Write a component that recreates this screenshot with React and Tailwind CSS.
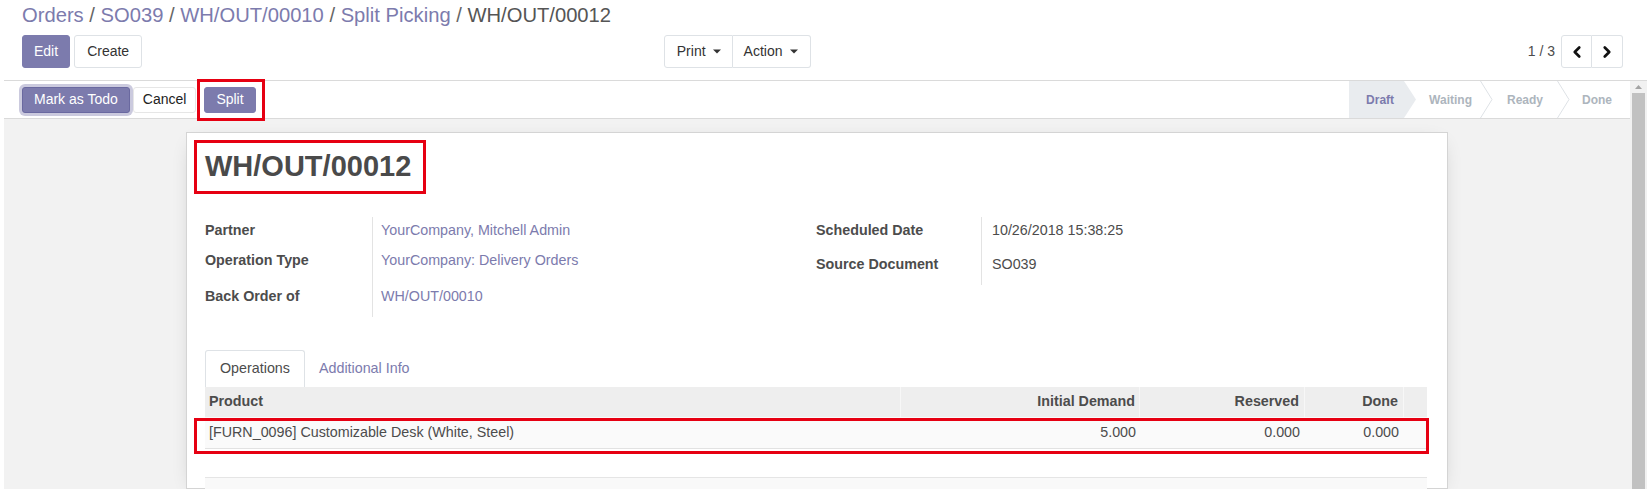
import React from "react";
import { ChevronLeft, ChevronRight } from "lucide-react";

function Caret() {
  return (
    <svg width="8" height="5" viewBox="0 0 8 5" className="ml-[7px]">
      <path d="M0 0.5h8L4 4.5z" fill="#333" />
    </svg>
  );
}

function FieldRow({ label, value, link, h, lw, vp }) {
  return (
    <div className={`flex ${h}`}>
      <div className={`${lw} shrink-0 border-r border-[#e3e3e3] font-bold flex items-center`}>{label}</div>
      <div className={`${vp} flex items-center ${link ? "text-[#7c7bad]" : "text-[#4c4c4c]"}`}>{value}</div>
    </div>
  );
}

export default function App() {
  return (
    <div className="w-[1647px] h-[489px] overflow-hidden bg-white flex flex-col pl-[4px] text-[14px] text-[#4c4c4c] font-['Liberation_Sans',Arial,sans-serif]">
      {/* Control panel */}
      <div className="pl-[18px] pr-[24px] pt-[2px] pb-[12px] border-b border-[#dadada]">
        <div className="h-[26px] leading-[26px] text-[20.2px] whitespace-nowrap">
          <span className="text-[#7c7bad]">Orders</span>
          <span className="text-[#666]"> / </span>
          <span className="text-[#7c7bad]">SO039</span>
          <span className="text-[#666]"> / </span>
          <span className="text-[#7c7bad]">WH/OUT/00010</span>
          <span className="text-[#666]"> / </span>
          <span className="text-[#7c7bad]">Split Picking</span>
          <span className="text-[#666]"> / </span>
          <span className="text-[#555]">WH/OUT/00012</span>
        </div>
        <div className="mt-[7px] flex h-[33px]">
          <div className="w-1/2 flex justify-between pr-[12px]">
            <div className="flex gap-[4px]">
              <button className="h-[33px] px-[11px] rounded-[3px] bg-[#7c7bad] border border-[#7c7bad] text-white">Edit</button>
              <button className="h-[33px] px-[12px] rounded-[3px] bg-white border border-[#dee2e6] text-[#333]">Create</button>
            </div>
            <div className="flex">
              <button className="h-[33px] pl-[12px] pr-[11px] rounded-l-[3px] bg-white border border-[#dee2e6] text-[#333] flex items-center">Print<Caret /></button>
              <button className="h-[33px] pl-[11px] pr-[12px] rounded-r-[3px] bg-white border border-l-0 border-[#dee2e6] text-[#333] flex items-center">Action<Caret /></button>
            </div>
          </div>
          <div className="w-1/2 flex justify-end items-center">
            <span className="mr-[6px] text-[#4c4c4c]">1 / 3</span>
            <div className="flex">
              <button className="h-[33px] w-[31px] rounded-l-[3px] border border-[#dee2e6] bg-white flex items-center justify-center text-[#111]">
                <ChevronLeft size={18} strokeWidth={3.6} />
              </button>
              <button className="h-[33px] w-[31px] rounded-r-[3px] border border-l-0 border-[#dee2e6] bg-white flex items-center justify-center text-[#111]">
                <ChevronRight size={18} strokeWidth={3.6} />
              </button>
            </div>
          </div>
        </div>
      </div>

      <div className="flex flex-1 min-h-0">
        <div className="flex-1 flex flex-col min-w-0">
          {/* Status bar */}
          <div className="h-[38px] shrink-0 border-b border-[#dadada] flex justify-between">
            <div className="flex items-center pl-[18px] gap-[3px]">
              <button className="h-[26px] px-[11px] rounded-[3px] bg-[#7c7bad] border border-[#6a69a0] text-white ring-[3px] ring-[#7c7bad]/40">Mark as Todo</button>
              <button className="h-[26px] px-[9px] rounded-[3px] bg-white border border-[#e6e6e6] text-[#222]">Cancel</button>
              <div className="relative ml-[5px]">
                <button className="h-[26px] px-[11px] rounded-[3px] bg-[#7c7bad] border border-[#7c7bad] text-white">Split</button>
                <div className="absolute left-[-7px] top-[-8px] w-[68px] h-[42px] border-[3px] border-[#e60012]" />
              </div>
            </div>
            <div className="flex items-stretch text-[12px] font-bold pr-[18px]">
              <div className="bg-[#e9ecef] text-[#7c7bad] pl-[17px] pr-[10px] flex items-center">Draft</div>
              <svg width="12" height="37" viewBox="0 0 12 37" className="shrink-0">
                <polygon points="0,0 12,18.5 0,37" fill="#e9ecef" />
              </svg>
              <div className="ml-[13px] text-[#adb5bd] flex items-center">Waiting</div>
              <svg width="13" height="37" viewBox="0 0 13 37" className="shrink-0 ml-[8px]">
                <polyline points="0.5,0 12,18.5 0.5,37" fill="none" stroke="#dee2e6" strokeWidth="1" />
              </svg>
              <div className="ml-[14px] text-[#adb5bd] flex items-center">Ready</div>
              <svg width="13" height="37" viewBox="0 0 13 37" className="shrink-0 ml-[14px]">
                <polyline points="0.5,0 12,18.5 0.5,37" fill="none" stroke="#dee2e6" strokeWidth="1" />
              </svg>
              <div className="ml-[12px] text-[#adb5bd] flex items-center">Done</div>
            </div>
          </div>

          {/* Sheet background */}
          <div className="flex-1 bg-[#f2f2f2] pt-[13px] min-h-0">
            <div className="w-[1262px] mx-auto h-full bg-white border border-[#d4d4d4] shadow-[0_5px_20px_-10px_rgba(0,0,0,0.3)] pl-[18px] pr-[20px] pt-[7px] text-[14.3px]">
              {/* Title */}
              <div className="-ml-[11px] w-[232px] h-[54px] border-[3px] border-[#e60012] pl-[8px] pt-[5px]">
                <h1 className="text-[29px] leading-[36px] font-bold text-[#4a4a4a] whitespace-nowrap">WH/OUT/00012</h1>
              </div>

              {/* Fields */}
              <div className="mt-[23px] grid grid-cols-2">
                <div>
                  <FieldRow label="Partner" value="YourCompany, Mitchell Admin" link h="h-[28px]" lw="w-[168px]" vp="pl-[8px]" />
                  <FieldRow label="Operation Type" value="YourCompany: Delivery Orders" link h="h-[32px]" lw="w-[168px]" vp="pl-[8px]" />
                  <FieldRow label="Back Order of" value="WH/OUT/00010" link h="h-[40px]" lw="w-[168px]" vp="pl-[8px]" />
                </div>
                <div>
                  <FieldRow label="Scheduled Date" value="10/26/2018 15:38:25" h="h-[28px]" lw="w-[166px]" vp="pl-[10px]" />
                  <FieldRow label="Source Document" value="SO039" h="h-[40px]" lw="w-[166px]" vp="pl-[10px]" />
                </div>
              </div>

              {/* Tabs */}
              <div className="mt-[33px] flex h-[37px]">
                <div className="px-[14px] border border-b-0 border-[#dee2e6] rounded-t-[3px] flex items-center bg-white text-[#4c4c4c]">Operations</div>
                <div className="px-[14px] flex items-center text-[#7c7bad]">Additional Info</div>
              </div>

              {/* Table */}
              <div className="relative">
                <div className="flex h-[30px] bg-[#eeeeee] font-bold">
                  <div className="w-[696px] pl-[4px] flex items-center border-r border-[#f7f7f7]">Product</div>
                  <div className="w-[239px] pr-[4px] flex items-center justify-end border-r border-[#f7f7f7]">Initial Demand</div>
                  <div className="w-[165px] pr-[5px] flex items-center justify-end border-r border-[#f7f7f7]">Reserved</div>
                  <div className="w-[99px] pr-[5px] flex items-center justify-end border-r border-[#f7f7f7]">Done</div>
                  <div className="flex-1" />
                </div>
                <div className="flex h-[32px] bg-[#fafafa] border-b border-[#e2e2e2]">
                  <div className="w-[696px] pl-[4px] flex items-center">[FURN_0096] Customizable Desk (White, Steel)</div>
                  <div className="w-[239px] pr-[4px] flex items-center justify-end">5.000</div>
                  <div className="w-[165px] pr-[5px] flex items-center justify-end">0.000</div>
                  <div className="w-[99px] pr-[5px] flex items-center justify-end">0.000</div>
                  <div className="flex-1" />
                </div>
                <div className="h-[28px]" />
                <div className="h-[30px] border-t border-[#e5e5e5] bg-[#f9f9f9]" />
                <div className="absolute left-[-11px] top-[31px] w-[1235px] h-[36px] border-[3px] border-[#e60012]" />
              </div>
            </div>
          </div>
        </div>

        {/* Scrollbar */}
        <div className="w-[17px] shrink-0 bg-[#f1f1f1] flex flex-col">
          <div className="h-[12px] flex items-center justify-center">
            <svg width="7" height="4" viewBox="0 0 7 4"><path d="M0 4L3.5 0L7 4z" fill="#a3a3a3" /></svg>
          </div>
          <div className="flex-1 mx-[2px] bg-[#c1c1c1]" />
        </div>
      </div>
    </div>
  );
}
